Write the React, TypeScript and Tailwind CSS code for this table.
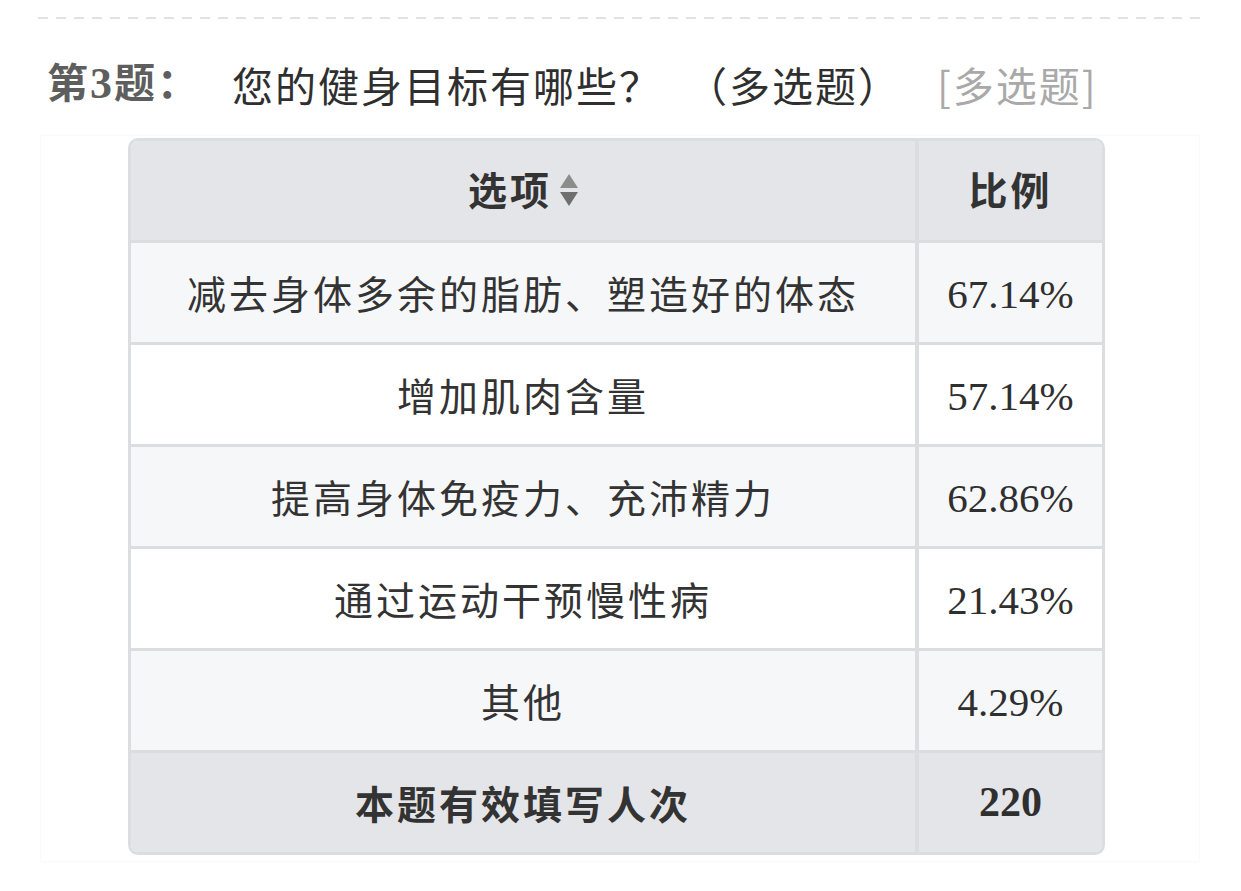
const cjk = { fontFamily: '"Noto Sans CJK SC", "Noto Sans", sans-serif' }

type Row = { label: string; pct: string }

const rows: Row[] = [
  { label: '减去身体多余的脂肪、塑造好的体态', pct: '67.14%' },
  { label: '增加肌肉含量', pct: '57.14%' },
  { label: '提高身体免疫力、充沛精力', pct: '62.86%' },
  { label: '通过运动干预慢性病', pct: '21.43%' },
  { label: '其他', pct: '4.29%' },
]

function SortIcon() {
  return (
    <svg width="18" height="32" viewBox="0 0 18 32" className="ml-[8px] mt-[2px]">
      <polygon points="9,0 18,14 0,14" fill="#8c8c8c" />
      <polygon points="0,18 18,18 9,32" fill="#6f6f6f" />
    </svg>
  )
}

export default function App() {
  return (
    <div className="w-[1241px] h-[891px] bg-white text-[#333] overflow-hidden" style={cjk}>
      <div className="pt-[17px] pl-[38px]">
        <div className="w-[1162px] h-[2px] bg-[repeating-linear-gradient(90deg,#e2e2e2_0_10px,transparent_10px_18px)]" />
      </div>

      {/* question title */}
      <div className="h-[116px] pt-[14px] pl-[47px] flex items-center whitespace-nowrap">
        <span
          className="text-[41px] font-bold text-[#5e5e5e] tracking-[2px] leading-none"
          style={{ fontFamily: '"Liberation Serif", "Noto Sans CJK SC", serif' }}
        >
          第<span className="text-[44px]">3</span>题：
        </span>
        <span className="ml-[32px] text-[41px] tracking-[2px] leading-none text-[#2f2f2f]">
          您的健身目标有哪些？
          <span className="ml-[24px]">（多选题）</span>
        </span>
        <span className="ml-[36px] text-[41px] tracking-[2px] leading-none text-[#a9a9a9]">[多选题]</span>
      </div>

      <div className="ml-[40px] w-[1160px] border border-[#fafafa] pt-[2px] pb-[6px]">
        <div className="ml-[87px] w-[977px] border-[3px] border-[#dcdde0] rounded-[10px] overflow-hidden">
          {/* header */}
          <div className="flex h-[102px] border-b-[3px] border-[#dcdde0] bg-[#e4e5e8]">
            <div className="w-[788px] pb-[4px] border-r-[4px] border-[#dcdde0] flex items-center justify-center text-[39px] tracking-[3px] font-bold">
              选项
              <SortIcon />
            </div>
            <div className="flex-1 pb-[4px] flex items-center justify-center text-[39px] tracking-[3px] font-bold">比例</div>
          </div>

          {rows.map((r, i) => (
            <div
              key={r.label}
              className={
                'flex h-[102px] border-b-[3px] border-[#dcdde0] ' + (i % 2 === 0 ? 'bg-[#f6f7f9]' : 'bg-white')
              }
            >
              <div className="w-[788px] border-r-[4px] border-[#dcdde0] flex items-center justify-center text-[39px] tracking-[3px]">
                {r.label}
              </div>
              <div
                className="flex-1 pt-[4px] flex items-center justify-center text-[41px] text-[#2f2f2f]"
                style={{ fontFamily: '"Liberation Serif", serif' }}
              >
                {r.pct}
              </div>
            </div>
          ))}

          {/* footer */}
          <div className="flex h-[99px] bg-[#e4e5e8]">
            <div className="w-[788px] border-r-[4px] border-[#dcdde0] flex items-center justify-center text-[39px] tracking-[3px] font-bold">
              本题有效填写人次
            </div>
            <div
              className="flex-1 flex items-center justify-center text-[42px] font-bold text-[#2f2f2f]"
              style={{ fontFamily: '"Liberation Serif", serif' }}
            >
              220
            </div>
          </div>
        </div>
      </div>
    </div>
  )
}
